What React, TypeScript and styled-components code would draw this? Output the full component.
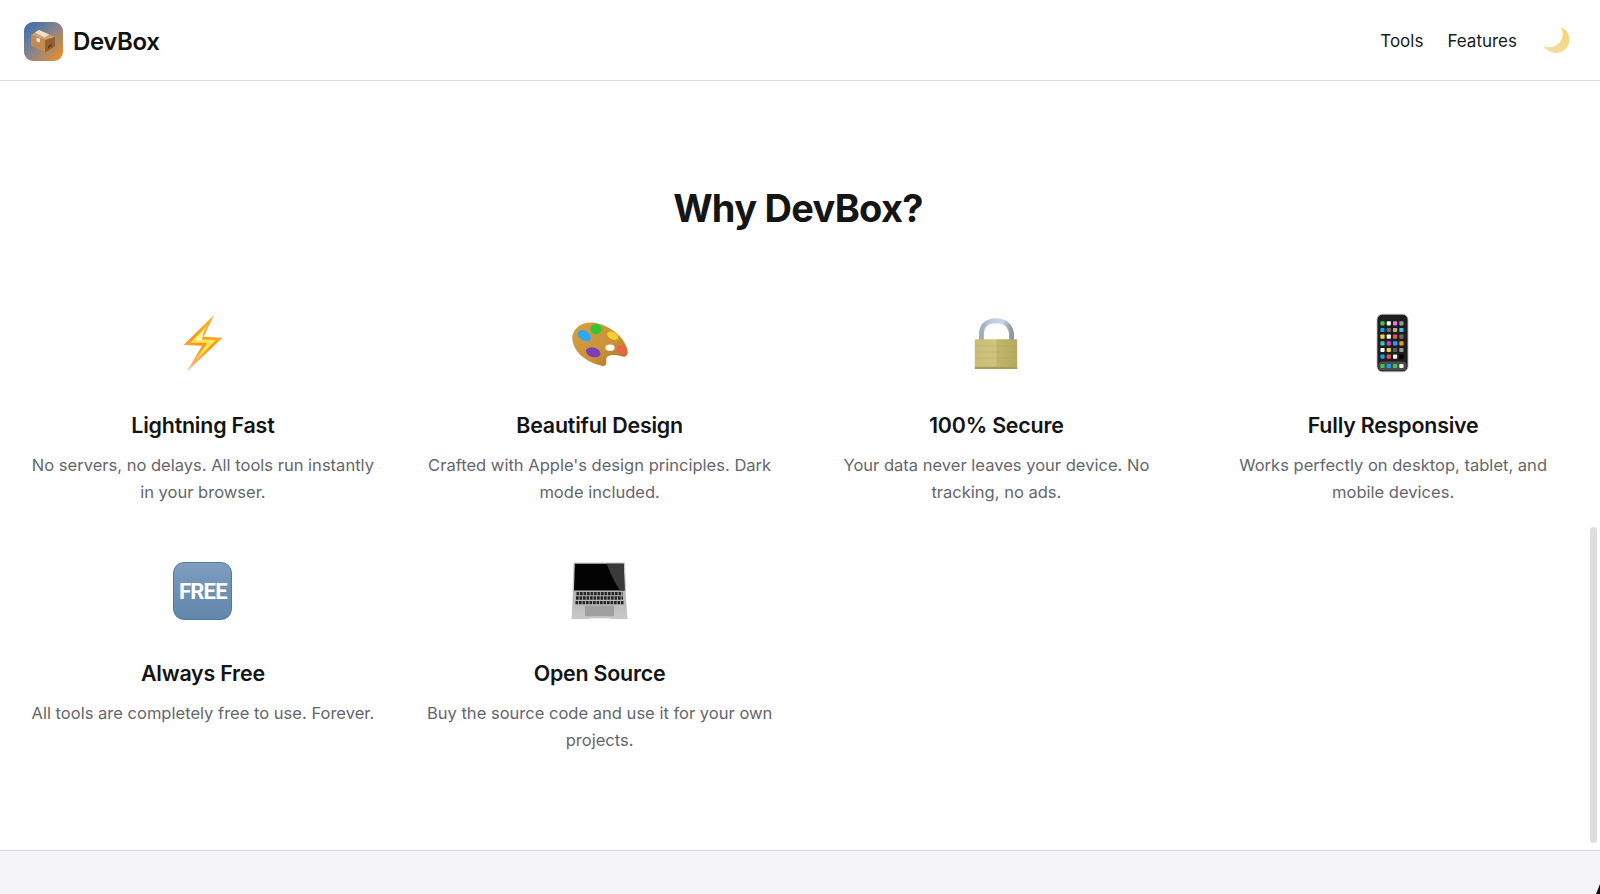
import React from "react";
import styled, { createGlobalStyle } from "styled-components";

const Global = createGlobalStyle`
  html, body { margin: 0; padding: 0; background: #fff; overflow: hidden; }
  body { font-family: Inter, "Noto Sans", "Liberation Sans", sans-serif; -webkit-font-smoothing: antialiased; }
`;

const Page = styled.div`
  position: relative;
  width: 1600px;
  height: 894px;
  display: flex;
  flex-direction: column;
  overflow: hidden;
  background: #fff;
`;

const Nav = styled.header`
  height: 77px;
  flex: none;
  border-bottom: 1px solid #d9d9df;
  display: flex;
  align-items: center;
  justify-content: space-between;
  padding: 3px 30px 0 24px;
`;

const Brand = styled.a`
  display: flex;
  align-items: center;
  gap: 10px;
  font-size: 24px;
  font-weight: 600;
  letter-spacing: -0.4px;
  color: #111;
`;

const LogoTile = styled.div`
  width: 39px;
  height: 39px;
  border-radius: 9px;
  background: linear-gradient(135deg, #2f6db5 0%, #8f8585 52%, #f0921c 100%);
  display: flex;
`;

const NavLinks = styled.nav`
  display: flex;
  align-items: center;
  gap: 24px;
  padding-bottom: 2px;
`;

const NavLink = styled.a`
  font-size: 17px;
  font-weight: 400;
  color: #1a1a1a;
`;

const MoonButton = styled.div`
  margin-left: 2px;
  width: 27px;
  height: 27px;
  display: flex;
`;

const Main = styled.main`
  flex: 1;
  display: flex;
  flex-direction: column;
  padding: 0 32.5px 0 28.5px;
`;

const Heading = styled.h2`
  margin: 102px 0 0;
  height: 50px;
  line-height: 50px;
  text-align: center;
  font-size: 38px;
  font-weight: 700;
  letter-spacing: -0.72px;
  color: #151515;
`;

const Grid = styled.div`
  margin-top: 80px;
  display: grid;
  grid-template-columns: repeat(4, 1fr);
  column-gap: 48px;
  row-gap: 56px;
  align-items: start;
`;

const Card = styled.article`
  display: flex;
  flex-direction: column;
  align-items: center;
  text-align: center;
`;

const IconBox = styled.div`
  width: 60px;
  height: 60px;
  display: flex;
  align-items: center;
  justify-content: center;
`;

const CardTitle = styled.h3`
  margin: 39.5px 0 0;
  font-size: 21.4px;
  line-height: 25px;
  font-weight: 600;
  letter-spacing: -0.2px;
  color: #141414;
`;

const CardText = styled.p`
  margin: 14.5px 0 0;
  font-size: 16.55px;
  line-height: 26.5px;
  font-weight: 400;
  color: #66666b;
`;

const Footer = styled.footer`
  height: 43px;
  flex: none;
  border-top: 1px solid #dcdce0;
  background: #f5f5f7;
`;

const Scrollbar = styled.div`
  position: absolute;
  left: 1590px;
  top: 527px;
  width: 7px;
  height: 316px;
  border-radius: 4px;
  background: #dedede;
`;

const CornerMark = styled.svg`
  position: absolute;
  right: 0;
  bottom: 0;
  width: 4px;
  height: 10px;
`;

const BoxGlyph = () => (
  <svg viewBox="0 0 39 39" width="39" height="39">
    <path d="M7 13 L15 8 L31 15 L21 18 Z" fill="#d2a06a" />
    <path d="M7 13 L21 18 L21 30.5 L7 23.5 Z" fill="#c48a4e" />
    <path d="M21 18 L31 15 L31 24.5 L21 30.5 Z" fill="#94602f" />
    <path d="M11 10.4 L15 8 L25 12.5 L20.5 15.5 Z" fill="#ece0d0" />
    <path d="M12.5 15.5 L16 16.8 L16 20.5 L12.5 19.2 Z" fill="#dfe8ec" />
    <path d="M24 24 L28 21.8 L28 24.2 L24 26.4 Z" fill="#6a4020" />
  </svg>
);

const Moon = () => (
  <svg viewBox="0 0 27 27" width="27" height="27">
    <defs>
      <linearGradient id="moon" x1="0" y1="1" x2="1" y2="0">
        <stop offset="0" stopColor="#f2dfa8" />
        <stop offset="0.6" stopColor="#f5d98a" />
        <stop offset="1" stopColor="#f6d269" />
      </linearGradient>
    </defs>
    <path d="M18 0.5 C24 2.5 27 8 26.2 14.5 C25.3 21.5 19 26.5 12 26 C7 25.5 2.5 23 0.5 18.8 C5 21 10.5 20.5 15 17 C19.8 13 21 6 18 0.5 Z" fill="url(#moon)" />
  </svg>
);

const Bolt = () => (
  <svg viewBox="0 0 60 60" width="60" height="60">
    <defs>
      <linearGradient id="boltOuter" x1="0.7" y1="0" x2="0.3" y2="1">
        <stop offset="0" stopColor="#f8b544" />
        <stop offset="0.5" stopColor="#f59a12" />
        <stop offset="1" stopColor="#f9b98a" />
      </linearGradient>
    </defs>
    <path d="M41.5 1.5 L10.5 32 L29 32.7 L13.5 59 L49.5 24.7 L30.5 23.7 Z" fill="url(#boltOuter)" />
    <path d="M35 11.5 L17.5 29.5 L34 30 L23 47 L43 27 L26.5 26.3 Z" fill="#fbe45c" />
    <path d="M31 17 L22 27 L29 27.2 Z" fill="#fff7bc" />
  </svg>
);

const Palette = () => (
  <svg viewBox="0 0 60 60" width="60" height="60">
    <defs>
      <linearGradient id="wood" x1="0" y1="0" x2="1" y2="1">
        <stop offset="0" stopColor="#d6a044" />
        <stop offset="0.6" stopColor="#cb9136" />
        <stop offset="1" stopColor="#a96f20" />
      </linearGradient>
    </defs>
    <path d="M2.3 24 C3 15 12 9 22 9.5 C38 10.5 55 24 57.5 37 C58.3 41.5 56.5 44.5 53 43.5 C47 41.5 40 41 37 44 C35.5 46 37 49 36 51.5 C35 53.5 32 53 29 52 C14 48 2 37 2.3 24 Z" fill="url(#wood)" />
    <ellipse cx="40" cy="34.7" rx="4.6" ry="3.1" fill="#fff" />
    <ellipse cx="14.3" cy="22.7" rx="7.2" ry="5" fill="#2fa8ee" transform="rotate(30 14.3 22.7)" />
    <ellipse cx="26" cy="16" rx="5.6" ry="5.2" fill="#34c42e" />
    <ellipse cx="42.7" cy="22.7" rx="6" ry="3.6" fill="#f5cf2e" transform="rotate(28 42.7 22.7)" />
    <ellipse cx="51.7" cy="37" rx="5.4" ry="3.8" fill="#f0604d" transform="rotate(45 51.7 37)" />
    <ellipse cx="23.3" cy="39.3" rx="7.5" ry="4.8" fill="#7d3fb8" transform="rotate(15 23.3 39.3)" />
  </svg>
);

const Lock = () => (
  <svg viewBox="-1 0 60 60" width="60" height="60">
    <defs>
      <linearGradient id="shackle" x1="0" y1="0" x2="1" y2="0">
        <stop offset="0" stopColor="#a4acb8" />
        <stop offset="0.3" stopColor="#b9c8e4" />
        <stop offset="0.7" stopColor="#cad5ea" />
        <stop offset="1" stopColor="#8d96a3" />
      </linearGradient>
      <linearGradient id="body" x1="0" y1="0" x2="1" y2="0">
        <stop offset="0" stopColor="#c9bd76" />
        <stop offset="0.5" stopColor="#cfc480" />
        <stop offset="0.52" stopColor="#c2b56c" />
        <stop offset="1" stopColor="#b5a85f" />
      </linearGradient>
    </defs>
    <path d="M14.5 27 V21 C14.5 12 21 7.8 29 7.8 C37 7.8 43.5 12 44.5 21 V27" fill="none" stroke="url(#shackle)" strokeWidth="5" />
    <rect x="7.8" y="26.3" width="42.4" height="29.7" rx="1" fill="url(#body)" />
    <path d="M7.8 33 H50.2 M7.8 39 H50.2 M7.8 45 H50.2" stroke="#b0a35c" strokeWidth="0.7" opacity="0.5" />
    <rect x="7.8" y="53.8" width="42.4" height="2.2" fill="#a99c55" />
  </svg>
);

const appColors = [
  "#3fc550", "#f5f5f5", "#d77fd8", "#9a9a9a",
  "#1e9ff0", "#6e6e6e", "#c9ae84", "#35c9e8",
  "#f5d33c", "#f5f5f5", "#e8534a", "#6a6a6a",
  "#35c9c9", "#c83fd0", "#1e9ff0", "#f59a10",
  "#f5f5f5", "#f5d33c", "#5a5a5a", "#999999",
  "#1e9ff0", "#e8534a", "#f5f5f5", "#000000",
];
const dockColors = ["#3fc550", "#1e9ff0", "#3fc550", "#f5f5f5"];

const Phone = () => (
  <svg viewBox="0 0 60 60" width="60" height="60">
    <rect x="14" y="1.2" width="31" height="57.6" rx="5.5" fill="#1e1e1e" stroke="#bdbdbd" strokeWidth="0.9" />
    {appColors.map((c, i) => (
      <rect key={i} x={17.4 + (i % 4) * 6.3} y={8.2 + Math.floor(i / 4) * 6.68} width="4.2" height="4.2" rx="0.8" fill={c} />
    ))}
    <rect x="15.5" y="48.5" width="28" height="9" rx="3.5" fill="#4b4b4b" />
    {dockColors.map((c, i) => (
      <rect key={i} x={17.4 + i * 6.3} y={50.9} width="4.2" height="4.2" rx="0.8" fill={c} />
    ))}
  </svg>
);

const FreeTile = styled.div`
  width: 59px;
  height: 58px;
  box-sizing: border-box;
  border-radius: 11px;
  border: 1px solid #55799d;
  background: linear-gradient(180deg, #7f9fbf 0%, #7093b6 40%, #6387ab 100%);
  display: flex;
  align-items: center;
  justify-content: center;
  color: #fff;
  font-family: Roboto, "Liberation Sans", sans-serif;
  font-weight: 700;
  font-size: 22px;
  letter-spacing: -0.8px;
`;

const Laptop = () => (
  <svg viewBox="0 0 60 60" width="60" height="60">
    <defs>
      <linearGradient id="deck" x1="0" y1="0" x2="0" y2="1">
        <stop offset="0" stopColor="#b4b4b4" />
        <stop offset="1" stopColor="#c8c8c8" />
      </linearGradient>
    </defs>
    <path d="M3.5 1.5 H55 L56 30.5 H2.5 Z" fill="#c6c6c6" />
    <path d="M4.8 2.8 H53.7 L54.6 29.5 H4 Z" fill="#030303" />
    <path d="M36.7 2.8 H53.7 L54.6 29.5 H50 C45 22 40 12 36.7 2.8 Z" fill="#3a3a3a" />
    <path d="M3 30 H55.5 L57.5 58 H1.5 Z" fill="url(#deck)" />
    <g fill="none" stroke="#262626" strokeWidth="3.4" strokeDasharray="2.7 0.8">
      <path d="M6.5 32.6 H52.5" />
      <path d="M6 37 H53" />
      <path d="M5.5 41.6 H53.5" />
    </g>
    <rect x="15" y="44.7" width="29" height="10.5" fill="#9f9f9f" />
    <rect x="20" y="57.4" width="20" height="1.2" fill="#ffffff" />
  </svg>
);

const features: { title: string; text: string; icon: React.ReactNode }[] = [
  { title: "Lightning Fast", text: "No servers, no delays. All tools run instantly in your browser.", icon: <Bolt /> },
  { title: "Beautiful Design", text: "Crafted with Apple's design principles. Dark mode included.", icon: <Palette /> },
  { title: "100% Secure", text: "Your data never leaves your device. No tracking, no ads.", icon: <Lock /> },
  { title: "Fully Responsive", text: "Works perfectly on desktop, tablet, and mobile devices.", icon: <Phone /> },
  { title: "Always Free", text: "All tools are completely free to use. Forever.", icon: <FreeTile>FREE</FreeTile> },
  { title: "Open Source", text: "Buy the source code and use it for your own projects.", icon: <Laptop /> },
];

export default function App() {
  return (
    <Page>
      <Global />
      <Nav>
        <Brand>
          <LogoTile><BoxGlyph /></LogoTile>
          DevBox
        </Brand>
        <NavLinks>
          <NavLink>Tools</NavLink>
          <NavLink>Features</NavLink>
          <MoonButton><Moon /></MoonButton>
        </NavLinks>
      </Nav>
      <Main>
        <Heading>Why DevBox?</Heading>
        <Grid>
          {features.map((f) => (
            <Card key={f.title}>
              <IconBox>{f.icon}</IconBox>
              <CardTitle>{f.title}</CardTitle>
              <CardText>{f.text}</CardText>
            </Card>
          ))}
        </Grid>
      </Main>
      <Footer />
      <Scrollbar />
      <CornerMark viewBox="0 0 4 10">
        <path d="M4 0 V10 H0 Z" fill="#111" />
      </CornerMark>
    </Page>
  );
}
